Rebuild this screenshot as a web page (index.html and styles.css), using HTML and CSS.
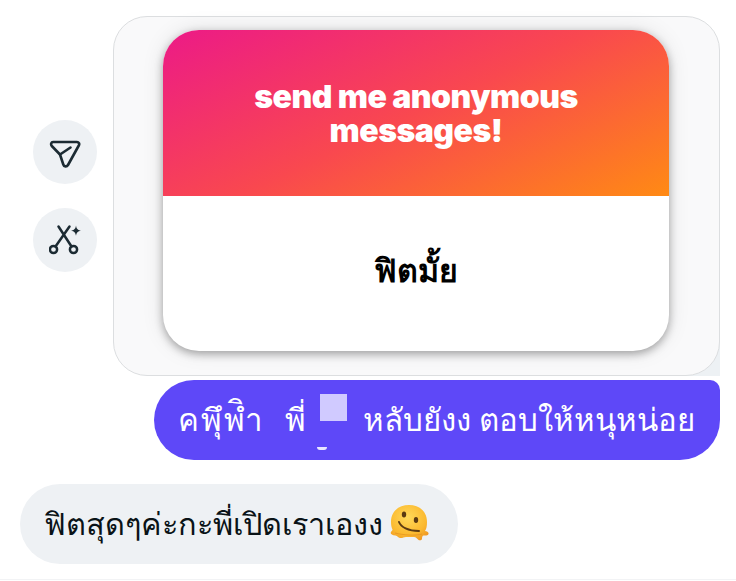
FILE: index.html
```html
<!DOCTYPE html>
<html lang="en">
<head>
  <meta charset="UTF-8" />
  <title>Story reply</title>
  <link rel="stylesheet" href="styles.css">
</head>
<body>
  <div class="thread">
    <div class="story-row">
      <div class="actions">
        <button class="action">
          <svg width="32" height="36" viewBox="0 0 32 36" fill="none" stroke="#1c2b33" stroke-width="2.600" stroke-linecap="round" stroke-linejoin="round">
            <path d="M4 8h24c1.800 0 2.800 2 1.800 3.500L19 31c-1.200 2-4 1.800-4.700-.5L11 20.500 2.800 12c-1.400-1.500-.5-4 1.200-4z"/>
            <path d="M11 20.500l10.500-7"/>
          </svg>
        </button>
        <button class="action">
          <svg width="32" height="32" viewBox="0 0 32 32" fill="none" stroke="#1c2b33" stroke-width="2.500" stroke-linecap="round">
            <path d="M9.500 2.500l13 20M20.500 2.500l-14 20"/>
            <circle cx="4.500" cy="25.500" r="3.600"/>
            <circle cx="24.500" cy="25.500" r="3.600"/>
            <path d="M27 1.500c.6 3.400 1.600 4.500 5 5.200-3.400.6-4.400 1.700-5 5.100-.6-3.400-1.600-4.500-5-5.100 3.400-.7 4.400-1.800 5-5.200z" fill="#1c2b33" stroke="none"/>
          </svg>
        </button>
      </div>
      <div class="story-frame">
        <div class="story-card">
          <div class="story-head">send me anonymous<br>messages!</div>
          <div class="story-body">ฟิตมั้ย</div>
        </div>
      </div>
    </div>

    <div class="bubble-row">
      <div class="bubble bubble--me"><span class="word-wide">คพึุพิำ</span> พี่ <span class="redact"></span> หลับยังง ตอบให้หนุหน่อย</div>
    </div>

    <div class="bubble bubble--them">ฟิตสุดๆค่ะกะพี่เปิดเราเองง<svg class="melt" width="44" height="42" viewBox="0 0 42 42">
        <defs>
          <radialGradient id="face" cx="0.45" cy="0.35" r="0.75">
            <stop offset="0" stop-color="#ffd95a"/>
            <stop offset="0.65" stop-color="#fbb92f"/>
            <stop offset="1" stop-color="#ee9322"/>
          </radialGradient>
        </defs>
        <path d="M3 19C3 8 11 2 21 2s18 6 18 17c0 4-.5 7-2 9 2 0 4 1.500 3.500 3-.5 1.800-3 1.500-5 1.500-1 0-1.500 1.500-1.500 3 0 2-2.500 2.500-4 1-1-1-2-2.500-4-2.500h-8c-2 0-4 1.500-6 1s-2.500-2-4.500-2.500C3.500 32 2 30.500 3 29c.6-1 1.500-1.500 1.500-2.500C3.500 24.500 3 22 3 19z" fill="url(#face)"/>
        <path d="M7 30c8 2 20 3 27 1" fill="none" stroke="#e08a1c" stroke-width="1" opacity=".6"/>
        <ellipse cx="16" cy="11.500" rx="2.200" ry="2.900" fill="#5b3a12"/>
        <ellipse cx="28" cy="17" rx="2.200" ry="2.900" fill="#5b3a12"/>
        <path d="M11 19c2 5 9 9 20 9" fill="none" stroke="#5b3a12" stroke-width="2" stroke-linecap="round"/>
      </svg></div>
  </div>
</body>
</html>
```

FILE: styles.css
```css
:root {
  --purple: #5e48f8;
  --grey: #eef1f4;
}

body {
  margin: 0;
  height: 581px;
  overflow: hidden;
  background: #fff;
  font-family: "Noto Sans", "Liberation Sans", sans-serif;
}

.thread {
  box-sizing: border-box;
  height: 580px;
  padding: 16px 16px 0 20px;
  border-bottom: 1px solid #f2f3f5;
}

/* story card with the side actions */
.story-row {
  display: flex;
  align-items: center;
  justify-content: flex-end;
  gap: 16px;
}

.actions {
  display: flex;
  flex-direction: column;
  gap: 24px;
  margin-top: -1px;
}

.action {
  width: 64px;
  height: 64px;
  padding: 0;
  border: 0;
  border-radius: 50%;
  background: var(--grey);
  display: flex;
  align-items: center;
  justify-content: center;
}

.story-frame {
  position: relative;
  box-sizing: border-box;
  width: 607px;
  height: 360px;
  padding: 13px 50px 0 49px;
  background: #f9f9fa;
  border: 1px solid #dcdee0;
  border-radius: 34px;
}

/* pale corner left behind the rounded frame */
.story-frame::before {
  content: "";
  position: absolute;
  right: -1px;
  bottom: -1px;
  width: 36px;
  height: 36px;
  background: #edf1f4;
  z-index: -1;
}

.story-card {
  border-radius: 36px;
  overflow: hidden;
  background: #fff;
  box-shadow: 0 3px 8px rgba(0,0,0,0.32), 0 0 22px rgba(0,0,0,0.1);
}

.story-head {
  height: 166px;
  padding-top: 50px;
  box-sizing: border-box;
  text-align: center;
  color: #fff;
  font-family: "Inter", "Liberation Sans", sans-serif;
  font-size: 32px;
  font-weight: 900;
  line-height: 34px;
  letter-spacing: -0.5px;
  background: linear-gradient(155deg, #ec1a87 0%, #f9484f 50%, #ff8a14 100%);
}

.story-body {
  height: 155px;
  display: flex;
  align-items: center;
  justify-content: center;
  padding-bottom: 6px;
  box-sizing: border-box;
  font-size: 32px;
  font-weight: 700;
  color: #000;
}

/* message bubbles */
.bubble-row {
  display: flex;
  justify-content: flex-end;
  margin-top: 4px;
}

.bubble {
  height: 80px;
  display: flex;
  align-items: center;
  font-size: 31.2px;
  white-space: pre;
}

.bubble--me {
  box-sizing: border-box;
  width: 566px;
  padding-left: 24px;
  color: #fff;
  background: var(--purple);
  border-radius: 40px 10px 40px 40px;
}

.word-wide {
  letter-spacing: 2px;
  margin-right: 12px;
}

.redact {
  position: relative;
  width: 27px;
  height: 27px;
  margin: -26px 8px 0 6px;
  background: #d0caff;
}

/* tail of a hidden letter under the redaction */
.redact::after {
  content: "";
  position: absolute;
  left: -3px;
  top: 53px;
  width: 10px;
  height: 3px;
  border-radius: 0 0 5px 5px;
  background: #e8e6ff;
}

.bubble--them {
  box-sizing: border-box;
  width: 438px;
  margin-top: 24px;
  padding-left: 24px;
  font-size: 30.7px;
  color: #0a1317;
  background: var(--grey);
  border-radius: 40px;
}

.melt {
  flex: none;
  margin-left: 4px;
}
```
